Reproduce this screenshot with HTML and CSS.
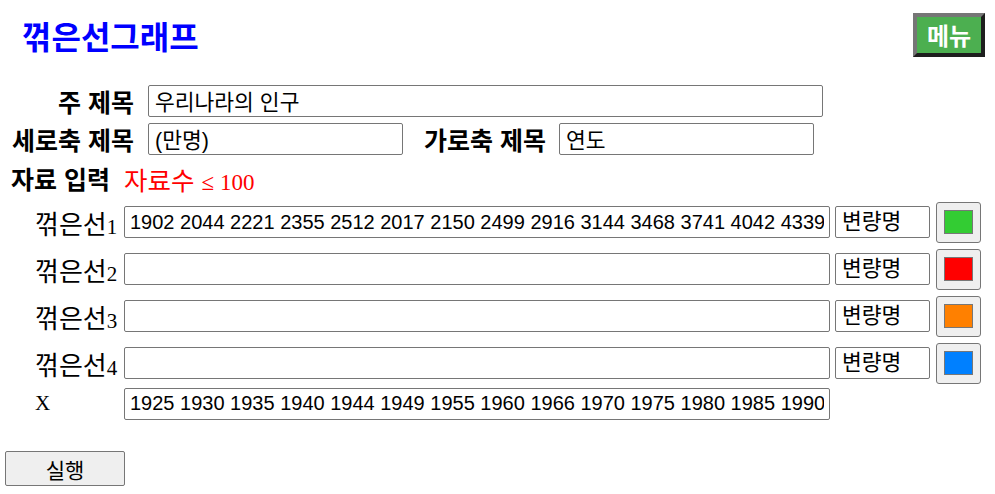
FILE: index.html
```html
<!DOCTYPE html>
<html lang="ko">
<head>
<meta charset="utf-8">
<title>꺾은선그래프</title>
<link rel="stylesheet" href="styles.css">
</head>
<body>
<header class="top">
  <h1 class="title">꺾은선그래프</h1>
  <button class="menu">메뉴</button>
</header>
<section class="form">
  <div class="row">
    <label class="lbl">주 제목</label>
    <input class="txt ko main" value="우리나라의 인구">
  </div>
  <div class="row">
    <label class="lbl">세로축 제목</label>
    <input class="txt ko axis" value="(만명)">
    <label class="lbl2">가로축 제목</label>
    <input class="txt ko axis" value="연도">
  </div>
  <div class="row data-head">
    <span class="head">자료 입력</span>
    <span class="limit">자료수 <span class="num">≤ 100</span></span>
  </div>
  <div class="line">
    <span class="lname">꺾은선<span class="num">1</span></span>
    <input class="txt series" value="1902 2044 2221 2355 2512 2017 2150 2499 2916 3144 3468 3741 4042 4339">
    <input class="txt var" placeholder="변량명">
    <button class="swatch"><span class="chip green"></span></button>
  </div>
  <div class="line">
    <span class="lname">꺾은선<span class="num">2</span></span>
    <input class="txt series" value="">
    <input class="txt var" placeholder="변량명">
    <button class="swatch"><span class="chip red"></span></button>
  </div>
  <div class="line">
    <span class="lname">꺾은선<span class="num">3</span></span>
    <input class="txt series" value="">
    <input class="txt var" placeholder="변량명">
    <button class="swatch"><span class="chip orange"></span></button>
  </div>
  <div class="line">
    <span class="lname">꺾은선<span class="num">4</span></span>
    <input class="txt series" value="">
    <input class="txt var" placeholder="변량명">
    <button class="swatch"><span class="chip blue"></span></button>
  </div>
  <div class="line xrow">
    <span class="lname xl">X</span>
    <input class="txt series" value="1925 1930 1935 1940 1944 1949 1955 1960 1966 1970 1975 1980 1985 1990">
  </div>
</section>
<button class="run">실행</button>
</body>
</html>
```
FILE: styles.css
```css
html, body { margin: 0; padding: 0; background: #fff; }
body {
  width: 995px;
  height: 494px;
  overflow: hidden;
  font-family: "Noto Sans CJK KR", "Liberation Sans", sans-serif;
  color: #000;
}
.top {
  display: flex;
  justify-content: space-between;
  align-items: flex-start;
  padding: 13px 10px 0 22px;
  height: 72px;
  box-sizing: border-box;
}
.title {
  margin: 0;
  font-size: 32px;
  line-height: 44px;
  font-weight: bold;
  color: #0000ff;
}
.menu {
  width: 72px;
  height: 44px;
  background: #4caf50;
  color: #fff;
  font-family: "Noto Sans CJK KR", sans-serif;
  font-weight: bold;
  font-size: 24px;
  border: 4px solid;
  border-color: #767676 #1e1e1e #1e1e1e #767676;
  padding: 0;
  line-height: 32px;
}
.form { padding: 13px 0 0 11px; }
.row {
  display: flex;
  align-items: center;
  height: 31px;
  margin-bottom: 7px;
}
.lbl {
  width: 123px;
  text-align: right;
  font-weight: bold;
  font-size: 25px;
  margin-right: 14px;
  white-space: nowrap;
}
.lbl2 {
  font-weight: bold;
  font-size: 25px;
  margin: 0 13px 0 21px;
  white-space: nowrap;
}
.txt {
  box-sizing: border-box;
  height: 32px;
  border: 1px solid #767676;
  border-radius: 2px;
  padding: 0 6px;
  font-family: "Liberation Sans", "Noto Sans CJK KR", sans-serif;
  font-size: 20px;
  color: #000;
  background: #fff;
  margin: 0;
}
.txt.ko { font-size: 21.5px; }
.txt::placeholder { color: #000; opacity: 1; }
.main { width: 675px; }
.axis { width: 255px; }
.data-head { height: 30px; margin-bottom: 9px; margin-top: 9px; }
.head { font-weight: bold; font-size: 25px; width: 113px; white-space: nowrap; }
.limit { color: #ff0000; font-size: 25.5px; }
.num { font-family: "Liberation Serif", serif; font-size: 23px; }
.line {
  display: flex;
  align-items: center;
  height: 40px;
  margin-bottom: 7px;
}
.lname {
  width: 89px;
  padding-left: 24px;
  font-size: 26px;
  font-family: "Noto Sans CJK KR", sans-serif;
  white-space: nowrap;
}
.lname .num { font-size: 21px; }
.lname.xl { font-family: "Liberation Serif", serif; font-size: 21px; }
.series { width: 706px; padding: 0 5px; }
.var { width: 95px; margin-left: 5px; font-size: 21.5px; }
.swatch {
  width: 45px;
  height: 41px;
  margin-left: 6px;
  background: #efefef;
  border: 1px solid #767676;
  border-radius: 3px;
  padding: 0;
  display: flex;
  align-items: center;
  justify-content: center;
}
.chip {
  display: block;
  width: 29px;
  height: 24px;
  border: 1px solid #777;
  box-sizing: border-box;
}
.green { background: #33cc33; }
.red { background: #ff0000; }
.orange { background: #ff8000; }
.blue { background: #0080ff; }
.xrow { height: 31px; margin-top: -2px; margin-bottom: 0; }
.run {
  margin: 32px 0 0 5px;
  width: 120px;
  height: 35px;
  background: #efefef;
  border: 1px solid #767676;
  border-radius: 2px;
  font-family: "Noto Sans CJK KR", sans-serif;
  font-size: 21px;
  color: #000;
  padding: 0;
}
```
